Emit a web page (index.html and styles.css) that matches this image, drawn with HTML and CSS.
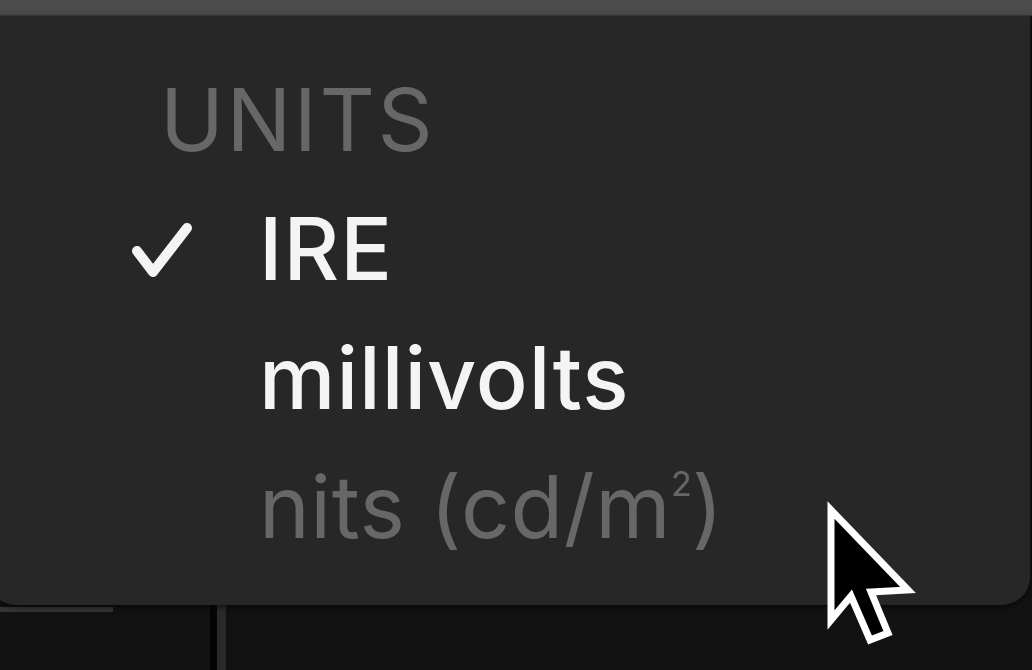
FILE: index.html
```html
<!DOCTYPE html>
<html lang="en">
<head>
<meta charset="utf-8">
<title>Units menu</title>
<link rel="stylesheet" href="styles.css">
</head>
<body>
<div class="screen">
  <div class="topbar"></div>
  <div class="menu">
    <div class="menu-header">UNITS</div>
    <div class="menu-item">
      <span class="check-slot">
        <svg class="check" width="64" height="62" viewBox="0 0 64 62"><polyline points="7,31 23,52 57,8" fill="none" stroke="#f4f4f4" stroke-width="10" stroke-linecap="round" stroke-linejoin="round"/></svg>
      </span>
      <span class="label">IRE</span>
    </div>
    <div class="menu-item">
      <span class="check-slot"></span>
      <span class="label">millivolts</span>
    </div>
    <div class="menu-item is-disabled">
      <span class="check-slot"></span>
      <span class="label">nits (cd/m<span class="sup">2</span>)</span>
    </div>
  </div>
  <div class="app-below">
    <div class="left-pane"><div class="pane-rule"></div></div>
    <div class="divider"></div>
    <div class="right-pane"></div>
  </div>
  <svg class="cursor" width="110" height="160" viewBox="0 0 110 160"><polygon points="5,10 5,120 25,96 44,140 62,133 45,92 82,90" fill="#000" stroke="#fff" stroke-width="7" stroke-linejoin="miter"/></svg>
</div>
</body>
</html>
```

FILE: styles.css
```css
html, body {
  margin: 0;
  padding: 0;
  background: #121212;
}
.screen {
  position: relative;
  width: 1032px;
  height: 670px;
  overflow: hidden;
  display: flex;
  flex-direction: column;
  font-family: Inter, "Liberation Sans", sans-serif;
}
.topbar {
  height: 15px;
  flex: none;
  background: #4b4b4b;
  border-bottom: 1px solid #3d3d3d;
}
.menu {
  flex: none;
  height: 589px;
  box-sizing: border-box;
  margin-left: -12px;
  width: 1042px;
  padding: 40px 0 0 142px;
  background: #272727;
  border-radius: 0 0 28px 28px;
  box-shadow: 0 2px 6px rgba(0, 0, 0, 0.6);
  position: relative;
  z-index: 1;
}
.menu-header,
.menu-item {
  font-size: 86px;
  line-height: 129px;
  height: 129px;
  white-space: nowrap;
}
.menu-header {
  color: #676767;
  padding-left: 30px;
  letter-spacing: 2.5px;
}
.menu-item {
  display: flex;
  align-items: center;
  color: #f4f4f4;
  font-weight: 500;
  letter-spacing: 1px;
}
.menu-item.is-disabled {
  color: #676767;
  font-weight: 400;
  letter-spacing: 0.5px;
}
.check-slot {
  width: 129px;
  flex: none;
  display: flex;
  align-items: center;
}
.check {
  display: block;
  margin-top: 2px;
}
.sup {
  font-size: 34px;
  line-height: 0;
  position: relative;
  top: -42px;
  letter-spacing: 0;
}
.app-below {
  flex: 1;
  display: flex;
  background: #121212;
}
.left-pane {
  width: 210px;
  flex: none;
}
.pane-rule {
  width: 113px;
  height: 5px;
  margin-top: 2px;
  background: #363636;
}
.divider {
  width: 7px;
  background: #050505;
  border-right: 9px solid #2a2a2a;
  flex: none;
}
.right-pane {
  flex: 1;
}
.cursor {
  position: absolute;
  left: 826px;
  top: 500px;
  z-index: 2;
}
```
